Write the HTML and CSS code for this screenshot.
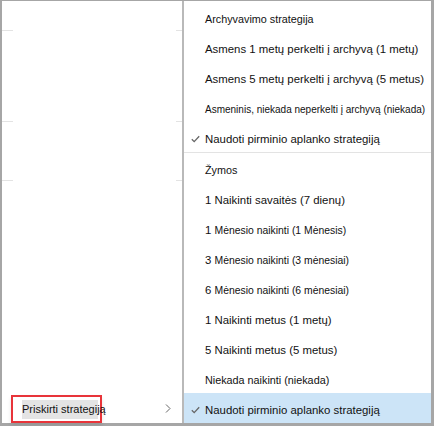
FILE: index.html
```html
<!DOCTYPE html>
<html lang="lt">
<head>
  <meta charset="UTF-8">
  <meta name="viewport" content="width=device-width, initial-scale=1.0">
  <title>Priskirti strategiją</title>
  <link rel="stylesheet" href="styles.css">
</head>
<body>
  <div class="frame">
    <div class="left-menu">
      <div class="list-bg">
        <div class="bg-row row-a"></div>
        <div class="bg-row row-b"></div>
        <div class="bg-row row-c"></div>
      </div>
      <div class="left-item">
        <div class="left-label"><span class="left-text">Priskirti strategiją</span></div>
        <svg class="chevron" width="6" height="9" viewBox="0 0 6 9">
          <path d="M1 0.5 L5 4.5 L1 8.5" fill="none" stroke="#666" stroke-width="1"/>
        </svg>
      </div>
    </div>

    <div class="submenu">
      <div class="item header">Archyvavimo strategija</div>
      <div class="item">Asmens 1 metų perkelti į archyvą (1 metų)</div>
      <div class="item">Asmens 5 metų perkelti į archyvą (5 metus)</div>
      <div class="item tiny">Asmeninis, niekada neperkelti į archyvą (niekada)</div>
      <div class="item checked">
        <svg class="check" width="9" height="8" viewBox="0 0 9 8">
          <path d="M0.8 4.2 L3.2 6.6 L8.2 1.2" fill="none" stroke="#666" stroke-width="1.3"/>
        </svg>
        <span>Naudoti pirminio aplanko strategiją</span>
      </div>

      <div class="separator"></div>

      <div class="item header">Žymos</div>
      <div class="item">1 Naikinti savaitės (7 dienų)</div>
      <div class="item">1&nbsp;<span class="small-part">Mėnesio naikinti (1 Mėnesis)</span></div>
      <div class="item">3&nbsp;<span class="small-part">Mėnesio naikinti (3 mėnesiai)</span></div>
      <div class="item">6&nbsp;<span class="small-part">Mėnesio naikinti (6 mėnesiai)</span></div>
      <div class="item">1 Naikinti metus (1 metų)</div>
      <div class="item">5 Naikinti metus (5 metus)</div>
      <div class="item header">Niekada naikinti (niekada)</div>
      <div class="item checked selected">
        <svg class="check" width="9" height="8" viewBox="0 0 9 8">
          <path d="M0.8 4.2 L3.2 6.6 L8.2 1.2" fill="none" stroke="#666" stroke-width="1.3"/>
        </svg>
        <span>Naudoti pirminio aplanko strategiją</span>
      </div>
    </div>
  </div>
</body>
</html>
```

FILE: styles.css
```css
* {
  box-sizing: border-box;
}

body {
  margin: 0;
  padding: 0;
  font-family: "Liberation Sans", Arial, sans-serif;
  color: #111;
  background: #fff;
}

.frame {
  width: 434px;
  height: 426px;
  display: flex;
  border-style: solid;
  border-color: #a6a6a6;
  border-width: 1px 3px 3px 2px;
  background: #fff;
}

/* left context menu */
.left-menu {
  flex: 0 0 180px;
  display: flex;
  flex-direction: column;
  justify-content: space-between;
}

.bg-row {
  position: relative;
}

.bg-row::before,
.bg-row::after {
  content: "";
  position: absolute;
  bottom: 0;
  height: 1px;
  background: #e3e3e3;
}

.bg-row::before {
  left: 0;
  width: 11px;
}

.bg-row::after {
  right: 0;
  width: 6px;
}

.row-a { height: 30px; }
.row-b { height: 91px; }
.row-c { height: 59px; }

.left-item {
  height: 30px;
  display: flex;
  align-items: flex-end;
  justify-content: space-between;
  padding: 0 11px 0 9px;
}

.left-label {
  width: 91px;
  height: 28px;
  border: 2px solid #e8343a;
  padding: 2px 0 0 9px;
  white-space: nowrap;
  box-shadow: 0 3px 4px rgba(0, 0, 0, 0.1);
}

.left-text {
  display: inline-block;
  font-size: 11px;
  line-height: 19px;
  background: linear-gradient(#e4e4e4, #e4e4e4) no-repeat 0 0 / 76px 19px;
}

.chevron {
  margin-bottom: 10px;
}

/* submenu */
.submenu {
  flex: 1;
  min-width: 0;
  border-left: 2px solid #b9b9b9;
  padding-top: 1px;
  display: flex;
  flex-direction: column;
}

.item {
  height: 30px;
  display: flex;
  align-items: center;
  padding: 4px 0 0 21px;
  font-size: 11.4px;
  white-space: nowrap;
}

.item.header {
  font-size: 10.8px;
}

.item.tiny {
  font-size: 10px;
}

.small-part {
  font-size: 10.4px;
}

.item.checked {
  padding-left: 7px;
}

.check {
  margin-right: 5px;
  margin-top: -1px;
}

.item.selected {
  background: #cce4f7;
}

.separator {
  height: 1px;
  background: #e3e3e3;
}
```
